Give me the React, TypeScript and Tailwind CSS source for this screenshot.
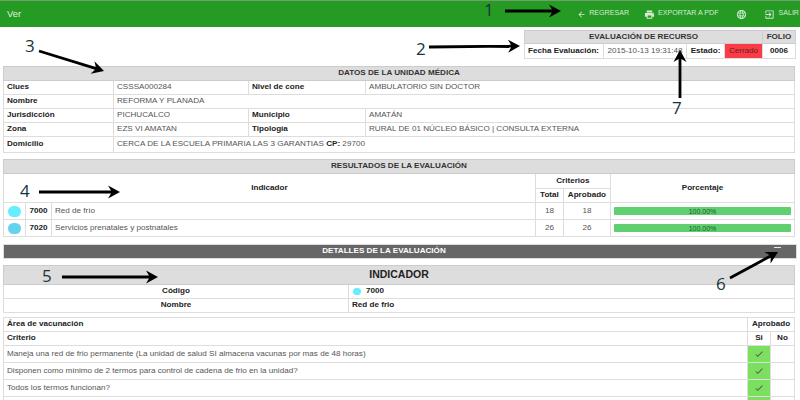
import { MdArrowBack, MdCheck, MdExitToApp, MdLanguage, MdPrint } from 'react-icons/md';

const th = 'border border-[#ddd] font-bold text-[#222] px-[3px] py-0 align-middle';
const td = 'border border-[#ddd] font-normal text-[#555] px-[3px] py-0 align-middle';
const head = 'border border-[#ccc] bg-[#ddd] font-bold text-[#333] text-center py-0 align-middle';

const unidad = [
  ['Clues', 'CSSSA000284', 'Nivel de cone', 'AMBULATORIO SIN DOCTOR'],
  ['Jurisdicción', 'PICHUCALCO', 'Municipio', 'AMATÁN'],
  ['Zona', 'EZS VI AMATAN', 'Tipología', 'RURAL DE 01 NÚCLEO BÁSICO | CONSULTA EXTERNA'],
];

const resultados = [
  { code: '7000', name: 'Red de frío', total: 18, ok: 18, color: 'bg-[#66eeff]' },
  { code: '7020', name: 'Servicios prenatales y postnatales', total: 26, ok: 26, color: 'bg-[#66d3ee]' },
];

const criterios = [
  'Maneja una red de frio permanente (La unidad de salud SI almacena vacunas por mas de 48 horas)',
  'Disponen como mínimo de 2  termos para control de cadena de frio en la unidad?',
  'Todos los termos funcionan?',
  '',
];

function NavLink({ icon, label }: { icon: React.ReactNode; label?: string }) {
  return (
    <span className="flex items-center gap-[3px] text-[7.1px] text-[#d5ecd5]">
      {icon}
      {label}
    </span>
  );
}

function Annotation({ n, x, y }: { n: string; x: number; y: number }) {
  return (
    <text x={x} y={y} fontSize="17" fill="#17343a" fontFamily="'Open Sans', sans-serif">
      {n}
    </text>
  );
}

function Arrow({ x1, y1, x2, y2 }: { x1: number; y1: number; x2: number; y2: number }) {
  const a = (Math.atan2(y2 - y1, x2 - x1) * 180) / Math.PI;
  const len = Math.hypot(x2 - x1, y2 - y1);
  return (
    <g transform={`translate(${x1} ${y1}) rotate(${a})`}>
      <path d={`M0 -1.4H${len - 9}L${len - 12} -6.5L${len} 0L${len - 12} 6.5L${len - 9} 1.4H0Z`} fill="#000" />
    </g>
  );
}

export default function App() {
  return (
    <div className="relative h-[400px] w-[800px] overflow-hidden bg-white font-['Liberation_Sans',Arial,sans-serif] text-[8.1px] leading-none">
      <header className="flex h-[27px] items-center justify-between border-t border-[#6f9f6f] bg-[#259b24] pl-[7px] pr-[1px]">
        <span className="text-[9.5px] text-[#dff0df]">Ver</span>
        <nav className="flex items-center">
          <NavLink icon={<MdArrowBack size={9} />} label="REGRESAR" />
          <span className="ml-[15px]">
            <NavLink icon={<MdPrint size={11} />} label="EXPORTAR A PDF" />
          </span>
          <span className="ml-[18px]">
            <NavLink icon={<MdLanguage size={11} />} />
          </span>
          <span className="ml-[17px]">
            <NavLink icon={<MdExitToApp size={11} />} label="SALIR" />
          </span>
        </nav>
      </header>

      <main className="px-[3px]">
        <div className="mt-[3px] flex justify-end pr-[1px]">
          <table className="w-[271px] table-fixed border-collapse">
            <colgroup>
              <col className="w-[79px]" />
              <col className="w-[83px]" />
              <col className="w-[38px]" />
              <col className="w-[38px]" />
              <col className="w-[33px]" />
            </colgroup>
            <tbody>
              <tr className="h-[13px]">
                <th colSpan={4} className={head}>EVALUACIÓN DE RECURSO</th>
                <th className={head}>FOLIO</th>
              </tr>
              <tr className="h-[15px]">
                <th className={`${th} whitespace-nowrap text-left`}>Fecha Evaluación:</th>
                <td className={`${td} whitespace-nowrap text-center`}>2015-10-13 19:31:48</td>
                <th className={`${th} text-center`}>Estado:</th>
                <td className={`${td} bg-[#fb3c46] text-center text-[#662222]`}>Cerrado</td>
                <th className={`${th} text-center`}>0006</th>
              </tr>
            </tbody>
          </table>
        </div>

        <table className="mt-[7px] w-[792px] table-fixed border-collapse">
          <colgroup>
            <col className="w-[110px]" />
            <col className="w-[135px]" />
            <col className="w-[117px]" />
            <col />
          </colgroup>
          <tbody>
            <tr className="h-[14px]">
              <th colSpan={4} className={head}>DATOS DE LA UNIDAD MÉDICA</th>
            </tr>
            <tr className="h-[14px]">
              <th className={`${th} text-left`}>{unidad[0][0]}</th>
              <td className={td}>{unidad[0][1]}</td>
              <th className={`${th} text-left`}>{unidad[0][2]}</th>
              <td className={td}>{unidad[0][3]}</td>
            </tr>
            <tr className="h-[14px]">
              <th className={`${th} text-left`}>Nombre</th>
              <td colSpan={3} className={td}>REFORMA Y PLANADA</td>
            </tr>
            {unidad.slice(1).map((row) => (
              <tr key={row[0]} className="h-[14px]">
                <th className={`${th} text-left`}>{row[0]}</th>
                <td className={td}>{row[1]}</td>
                <th className={`${th} text-left`}>{row[2]}</th>
                <td className={td}>{row[3]}</td>
              </tr>
            ))}
            <tr className="h-[16px]">
              <th className={`${th} text-left`}>Domicilio</th>
              <td colSpan={3} className={td}>
                CERCA DE LA ESCUELA PRIMARIA LAS 3 GARANTIAS <b className="text-[#222]">CP:</b> 29700
              </td>
            </tr>
          </tbody>
        </table>

        <table className="mt-[6px] w-[792px] table-fixed border-collapse">
          <colgroup>
            <col className="w-[22px]" />
            <col className="w-[26px]" />
            <col />
            <col className="w-[28px]" />
            <col className="w-[47px]" />
            <col className="w-[184px]" />
          </colgroup>
          <tbody>
            <tr className="h-[14px]">
              <th colSpan={6} className={head}>RESULTADOS DE LA EVALUACIÓN</th>
            </tr>
            <tr className="h-[15px]">
              <th colSpan={3} rowSpan={2} className={`${th} text-center`}>Indicador</th>
              <th colSpan={2} className={`${th} text-center`}>Criterios</th>
              <th rowSpan={2} className={`${th} text-center`}>Porcentaje</th>
            </tr>
            <tr className="h-[14px]">
              <th className={`${th} text-center`}>Total</th>
              <th className={`${th} text-center`}>Aprobado</th>
            </tr>
            {resultados.map((r) => (
              <tr key={r.code} className="h-[17px]">
                <td className={`${td} !px-0`}>
                  <div className={`mx-auto h-[11px] w-[13px] rounded-full ${r.color}`} />
                </td>
                <th className={`${th} text-center`}>{r.code}</th>
                <td className={td}>{r.name}</td>
                <td className={`${td} text-center`}>{r.total}</td>
                <td className={`${td} text-center`}>{r.ok}</td>
                <td className={td}>
                  <div className="flex h-[8px] items-center justify-center rounded-[1px] bg-[#5fcf70] text-[7px] text-[#1d5a2a]">
                    100.00%
                  </div>
                </td>
              </tr>
            ))}
          </tbody>
        </table>

        <div className="relative mt-[7px] flex h-[15px] items-center justify-center border border-[#ddd] bg-[#666] pr-[32px] font-bold text-white">
          DETALLES DE LA EVALUACIÓN
          <span className="absolute right-[15px] top-[2px] h-[1px] w-[7px] bg-[#e8e8e8]" />
        </div>

        <table className="mt-[6px] w-[792px] table-fixed border-collapse">
          <colgroup>
            <col className="w-[345px]" />
            <col />
          </colgroup>
          <tbody>
            <tr className="h-[19px]">
              <th colSpan={2} className={`${head} pb-[1px] text-[10.5px] !text-[#222]`}>INDICADOR</th>
            </tr>
            <tr className="h-[14px]">
              <th className={`${th} text-center`}>Código</th>
              <th className={`${th} text-left`}>
                <span className="flex items-center gap-[5px] pl-[1px]">
                  <span className="h-[7px] w-[8px] rounded-full bg-[#66eeff]" />
                  7000
                </span>
              </th>
            </tr>
            <tr className="h-[14px]">
              <th className={`${th} text-center`}>Nombre</th>
              <th className={`${th} text-left`}>Red de frio</th>
            </tr>
          </tbody>
        </table>

        <table className="mt-[4px] w-[792px] table-fixed border-collapse">
          <colgroup>
            <col />
            <col className="w-[23px]" />
            <col className="w-[24px]" />
          </colgroup>
          <tbody>
            <tr className="h-[14px]">
              <th className={`${th} text-left`}>Área de vacunación</th>
              <th colSpan={2} className={`${th} text-center`}>Aprobado</th>
            </tr>
            <tr className="h-[14px]">
              <th className={`${th} text-left`}>Criterio</th>
              <th className={`${th} text-center`}>Si</th>
              <th className={`${th} text-center`}>No</th>
            </tr>
            {criterios.map((c, i) => (
              <tr key={i} className="h-[17px]">
                <td className={td}>{c}</td>
                <td className={`${td} bg-[#7be05f] text-center text-[#4b8a3c]`}>
                  <MdCheck size={10} className="mx-auto" />
                </td>
                <td className={td} />
              </tr>
            ))}
          </tbody>
        </table>
      </main>

      {/* numbered arrows drawn over the screenshot */}
      <svg className="pointer-events-none absolute left-0 top-0" width="800" height="400">
        <Annotation n="1" x={484} y={16} />
        <Arrow x1={505} y1={11} x2={561} y2={11} />
        <Annotation n="2" x={416} y={55} />
        <Arrow x1={429} y1={47} x2={520} y2={46} />
        <Annotation n="3" x={25} y={52} />
        <Arrow x1={39} y1={51} x2={104} y2={71} />
        <Annotation n="4" x={20} y={197} />
        <Arrow x1={39} y1={192} x2={120} y2={192} />
        <Annotation n="5" x={42} y={282} />
        <Arrow x1={62} y1={277} x2={158} y2={277} />
        <Annotation n="6" x={716} y={290} />
        <Arrow x1={730} y1={278} x2={778} y2={252} />
        <Annotation n="7" x={672} y={114} />
        <Arrow x1={680} y1={98} x2={680} y2={50} />
      </svg>
    </div>
  );
}
